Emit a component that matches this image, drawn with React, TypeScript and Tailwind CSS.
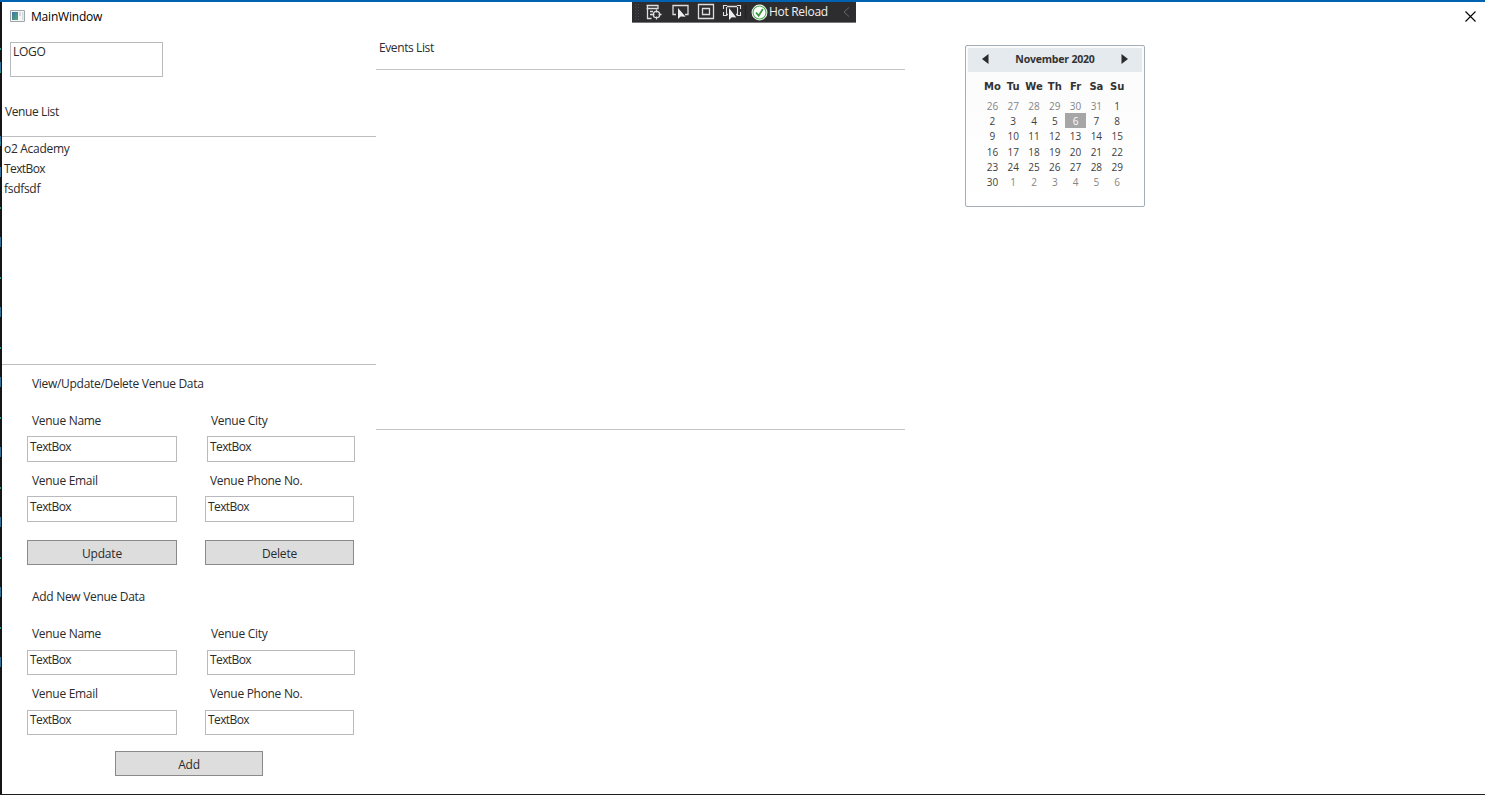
import React from "react";

const days = ["Mo", "Tu", "We", "Th", "Fr", "Sa", "Su"];
const dates = [
  26, 27, 28, 29, 30, 31, 1, 2, 3, 4, 5, 6, 7, 8, 9, 10, 11, 12, 13, 14, 15, 16, 17, 18, 19, 20,
  21, 22, 23, 24, 25, 26, 27, 28, 29, 30, 1, 2, 3, 4, 5, 6,
];

function Field({ className = "", pad = "pt-px" }: { className?: string; pad?: string }) {
  return (
    <div className={`border border-[#b9babd] bg-white pl-[2px] tracking-[-0.6px] ${pad} ${className}`}>TextBox</div>
  );
}

function Button({ label, className = "" }: { label: string; className?: string }) {
  return (
    <button
      className={`flex h-[25px] items-center justify-center border border-[#8a8a8a] bg-[#dddddd] pt-[3px] leading-4 tracking-[-0.2px] ${className}`}
    >
      {label}
    </button>
  );
}

function VenueForm({ title, tall }: { title: string; tall: boolean }) {
  const field = tall ? "h-[26px]" : "h-[25px]";
  const pad = tall ? "pt-px" : "pt-0";
  return (
    <section>
      <h2 className="ml-[30px] h-[37px]">{title}</h2>
      <div className="flex h-6">
        <span className="ml-[30px] w-[179px]">Venue Name</span>
        <span>Venue City</span>
      </div>
      <div className={`flex ${tall ? "h-9" : "mt-px h-[35px]"}`}>
        <Field pad={pad} className={`ml-[25px] w-[150px] ${field}`} />
        <Field pad={pad} className={`ml-[30px] w-[148px] ${field}`} />
      </div>
      <div className="flex h-6">
        <span className="ml-[30px] w-[178px]">Venue Email</span>
        <span>Venue Phone No.</span>
      </div>
      <div className={`flex ${tall ? "" : "mt-px"}`}>
        <Field pad={pad} className={`ml-[25px] w-[150px] ${field}`} />
        <Field pad={pad} className={`ml-[28px] w-[149px] ${field}`} />
      </div>
    </section>
  );
}

function Calendar() {
  return (
    <div className="h-[162px] w-[180px] rounded-[2px] border border-[#a3aeb9] bg-gradient-to-b from-[#fbfbfc] to-white px-[2px] pt-[2px] tracking-normal text-[#333]">
      <div className="flex h-6 items-center justify-between bg-[#e5eaef] pr-[14px] pb-[3px] pl-[14px]">
        <svg width="7" height="10" viewBox="0 0 7 10">
          <path d="M6.5 0v10L0 5z" fill="#2b2b2b" />
        </svg>
        <span className="text-[10.5px] leading-4 font-bold tracking-[-0.2px]">November 2020</span>
        <svg width="7" height="10" viewBox="0 0 7 10">
          <path d="M.5 0v10L7 5z" fill="#2b2b2b" />
        </svg>
      </div>
      <div className="mt-[5px] ml-[14px] grid w-[145.6px] grid-cols-7 text-center font-['DejaVu_Sans'] text-[10px] leading-5 font-bold">
        {days.map((d) => (
          <span key={d}>{d}</span>
        ))}
      </div>
      <div className="mt-px ml-[14px] grid w-[145.6px] auto-rows-[15.2px] grid-cols-7 text-center text-[10px] leading-[17px]">
        {dates.map((d, i) => (
          <span
            key={i}
            className={
              i === 11 ? "bg-[#a6a6a6] text-white" : i < 6 || i > 35 ? "text-[#858585]" : "text-[#404040]"
            }
          >
            {d}
          </span>
        ))}
      </div>
    </div>
  );
}

function Toolbar() {
  return (
    <div className="absolute top-0 left-[632px] h-[21px] w-[224px] border-b border-[#777] bg-[#2d2d30] text-[#f1f1f1]">
      <div className="flex h-5 items-center">
        <svg width="119" height="20" viewBox="0 0 119 20" fill="none" stroke="#dedede" strokeWidth="1.3">
          <g stroke="#4a4a4e" strokeWidth="1" strokeDasharray="1 2">
            <path d="M3.5 2v16M6.5 2v16M5 3.5v14" />
          </g>
          <path d="M14.5 3.5h12M14.5 6.5h12M15.5 3v13.5h4M26 3v4M18 9.5h3M18 12.5h2" />
          <circle cx="24.5" cy="12.5" r="3.2" />
          <path d="M24.5 7.5v3M24.5 14.5v3M19.5 12.5h3M26.5 12.5h3" />
          <path d="M44 12.5h-3v-9h15v9h-3" />
          <path d="M46 6v11l2.7-2.4 4.9.1z" fill="#eee" stroke="none" />
          <path d="M66.5 2.5h15v14h-15zM70.5 6.5h7v6h-7z" />
          <path d="M95 4.5h10M94 12.5h2M104 12.5h2" />
          <path d="M91.5 7V3.5H95M108.5 7V3.5H105M91.5 10v3.5H95M108.5 10v3.5H105M94.5 5v7M105.5 5v7" strokeWidth="1.1" />
          <path d="M97 6v12l2.8-2.7 4.5.3z" fill="#eee" stroke="none" />
          <path d="M113.5 3v14" stroke="#222225" />
        </svg>
        <svg width="17" height="17" viewBox="0 0 17 17" fill="none">
          <circle cx="8.5" cy="8.5" r="7.9" fill="#fff" />
          <circle cx="8.5" cy="8.5" r="6.5" fill="#fff" stroke="#4aae50" strokeWidth="1.1" />
          <path d="M5 8.5l2.7 3.2L11.8 5" stroke="#389d40" strokeWidth="1.8" />
        </svg>
        <span className="ml-px w-[60px] text-xs leading-4 whitespace-nowrap">Hot Reload</span>
        <svg className="ml-[14px]" width="7" height="10" viewBox="0 0 7 10" fill="none" stroke="#66666a">
          <path d="M6 .5L1 5l5 4.5" />
        </svg>
      </div>
    </div>
  );
}

const marks = [48, 62, 71, 136, 142, 167, 207, 237, 277, 307, 347, 377, 417, 447, 487, 517, 557, 587, 627, 657];

export default function App() {
  return (
    <div className="relative flex h-[795px] w-[1485px] flex-col overflow-hidden border-t-2 border-b border-t-[#0063b1] border-b-[#1e1e1e] bg-white font-['Open_Sans',sans-serif] text-xs leading-[18px] tracking-[-0.3px] whitespace-nowrap text-[#2b2b2b]">
      <div className="flex min-h-0 flex-1">
        <svg className="shrink-0" width="2" height="792">
          <rect width="2" height="792" fill="#151517" />
          {marks.map((y, i) => (
            <rect key={y} y={y - 2} width={1} height={i % 2 ? 10 : 2} fill={i % 2 ? "#356f95" : "#2d9484"} />
          ))}
        </svg>
        <div className="flex flex-1 flex-col">
          <header className="flex h-9 items-start justify-between pt-[6px] text-black">
            <div className="flex">
              <svg className="mt-[2px] ml-2" width="15" height="12" viewBox="0 0 15 12">
                <defs>
                  <linearGradient id="pane" x1="0" x2="1" y2="1">
                    <stop stopColor="#3c74a8" />
                    <stop offset="1" stopColor="#58a878" />
                  </linearGradient>
                </defs>
                <path d="M.5.5h14v11H.5z" fill="#f5f5f5" stroke="#a0a5aa" />
                <path d="M2 2h6v8H2z" fill="url(#pane)" />
                <path d="M9 2h2v4H9zM12 2h1.5v8H12z" fill="#d4dce2" />
              </svg>
              <span className="mt-px ml-[6px] leading-4 tracking-[-0.2px]">MainWindow</span>
            </div>
            <svg className="mt-[3px] mr-[9px]" width="11" height="11" viewBox="0 0 11 11" stroke="#000" strokeWidth="1.1">
              <path d="M.5.5l10 10M10.5.5l-10 10" />
            </svg>
          </header>
          <main className="flex flex-1">
            <div className="w-[375px] shrink-0">
              <div className="mt-1 ml-2 h-[35px] w-[153px] border border-[#b9babd] pl-[2px]">LOGO</div>
              <div className="mt-[26px] ml-[3px] h-[33px] tracking-[-0.4px]">Venue List</div>
              <ul className="h-[229px] w-[374px] border-y border-[#bdbec0] pt-[2px] pl-[2px] leading-5">
                <li>o2 Academy</li>
                <li className="tracking-[-0.6px]">TextBox</li>
                <li>fsdfsdf</li>
              </ul>
              <div className="mt-[10px]">
                <VenueForm title="View/Update/Delete Venue Data" tall />
              </div>
              <div className="mt-[18px] flex">
                <Button label="Update" className="ml-[25px] w-[150px]" />
                <Button label="Delete" className="ml-[28px] w-[149px]" />
              </div>
              <div className="mt-[23px]">
                <VenueForm title="Add New Venue Data" tall={false} />
              </div>
              <Button label="Add" className="mt-4 ml-[113px] w-[148px]" />
            </div>
            <div className="-ml-px w-[529px]">
              <div className="mt-px ml-[3px] h-[30px] tracking-[-0.4px]">Events List</div>
              <div className="h-[361px] border-y border-[#c4c5c7]" />
            </div>
            <div className="mt-[7px] ml-[60px]">
              <Calendar />
            </div>
          </main>
        </div>
      </div>
      <Toolbar />
    </div>
  );
}
